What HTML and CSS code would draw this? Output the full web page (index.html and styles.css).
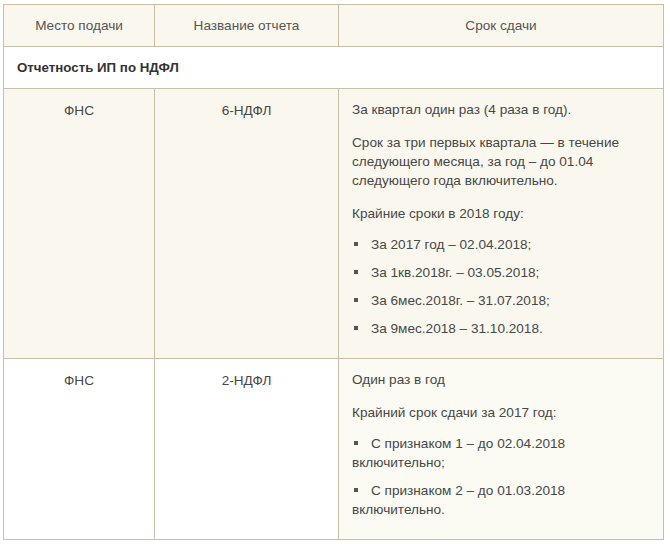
FILE: index.html
```html
<!DOCTYPE html>
<html lang="ru">
<head>
<meta charset="utf-8">
<link rel="stylesheet" href="styles.css">
</head>
<body>
<table class="report">
  <colgroup>
    <col class="c1">
    <col class="c2">
    <col class="c3">
  </colgroup>
  <thead>
    <tr>
      <th>Место подачи</th>
      <th>Название отчета</th>
      <th>Срок сдачи</th>
    </tr>
  </thead>
  <tbody>
    <tr class="section">
      <td colspan="3">Отчетность ИП по НДФЛ</td>
    </tr>
    <tr class="alt">
      <td class="center">ФНС</td>
      <td class="center">6-НДФЛ</td>
      <td class="desc">
        <p>За квартал один раз (4 раза в год).</p>
        <p>Срок за три первых квартала — в течение следующего месяца, за год – до 01.04 следующего года включительно.</p>
        <p>Крайние сроки в 2018 году:</p>
        <ul>
          <li>За 2017 год – 02.04.2018;</li>
          <li>За 1кв.2018г. – 03.05.2018;</li>
          <li>За 6мес.2018г. – 31.07.2018;</li>
          <li>За 9мес.2018 – 31.10.2018.</li>
        </ul>
      </td>
    </tr>
    <tr>
      <td class="center">ФНС</td>
      <td class="center">2-НДФЛ</td>
      <td class="desc tint">
        <p>Один раз в год</p>
        <p>Крайний срок сдачи за 2017 год:</p>
        <ul>
          <li>С признаком 1 – до 02.04.2018 включительно;</li>
          <li>С признаком 2 – до 01.03.2018 включительно.</li>
        </ul>
      </td>
    </tr>
  </tbody>
</table>
</body>
</html>
```

FILE: styles.css
```css
html, body {
  margin: 0;
  padding: 0;
  background: #ffffff;
}

body {
  padding: 4px 0 0 3px;
  font-family: "Liberation Sans", Arial, sans-serif;
  font-size: 13.6px;
  color: #474747;
}

.report {
  border-collapse: collapse;
  width: 660px;
  table-layout: fixed;
}

.c1 { width: 151px; }
.c2 { width: 184px; }
.c3 { width: 325px; }

.report th,
.report td {
  border: 1px solid #c9bfa6;
  vertical-align: top;
  line-height: 19px;
}

.report th {
  background: #faf8ee;
  font-weight: normal;
  color: #555555;
  height: 41px;
  padding: 0 10px;
  vertical-align: middle;
  text-align: center;
}

.section td {
  height: 41px;
  padding: 0 13px;
  vertical-align: middle;
  font-weight: bold;
  font-size: 13.3px;
  color: #333333;
  background: #ffffff;
}

.alt td {
  background: #faf8ee;
}

.report td.center {
  text-align: center;
  padding: 12px 10px;
}

.report td.desc {
  padding: 11px 12px 11px 13px;
}

.report td.tint {
  background: #fbfaf3;
}

.desc p {
  margin: 0 0 14px 0;
}

.desc ul {
  list-style: none;
  margin: -2px 0 0 0;
  padding: 0;
}

.desc li {
  margin: 0 0 9px 0;
}

.desc li::before {
  content: "";
  display: inline-block;
  width: 4px;
  height: 4px;
  background: #555555;
  margin: 0 13px 2px 2px;
  vertical-align: middle;
}
```
